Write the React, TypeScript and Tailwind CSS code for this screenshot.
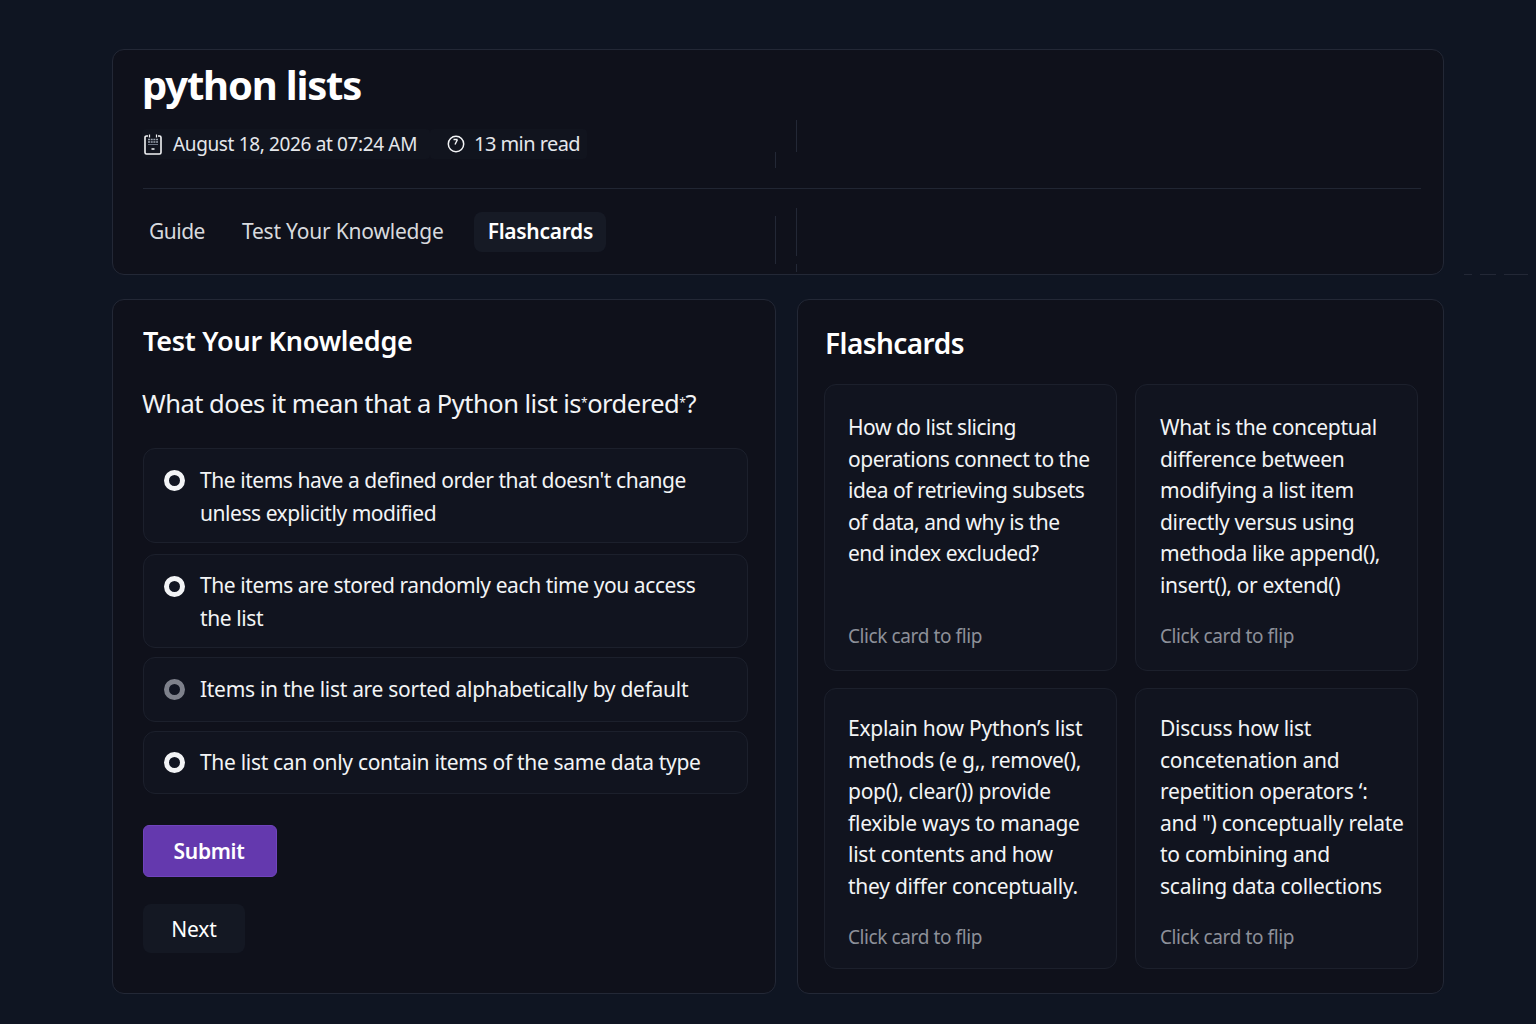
// =========================
// DATA
// =========================
const OPTIONS = [
  { text: "The items have a defined order that doesn't change unless explicitly modified", box: "h-[95px] mb-[11px] items-start pt-[15px]", radio: "mt-[6px]", track: "tracking-[-0.45px]", muted: false },
  { text: "The items are stored randomly each time you access the list", box: "h-[94px] mb-[9px] items-start pt-[14px]", radio: "mt-[7px]", track: "tracking-[-0.41px]", muted: false },
  { text: "Items in the list are sorted alphabetically by default", box: "h-[65px] mb-[9px] items-center", radio: "", track: "tracking-[-0.29px]", muted: true },
  { text: "The list can only contain items of the same data type", box: "h-[63px] items-center", radio: "", track: "tracking-[-0.31px]", muted: false },
];

const CARDS = [
  { lines: ["How do list slicing", "operations connect to the", "idea of retrieving subsets", "of data, and why is the", "end index excluded?"], track: "tracking-[-0.48px]", box: "h-[287px] pl-[23px] pt-[27px] pb-[20px]" },
  { lines: ["What is the conceptual", "difference between", "modifying a list item", "directly versus using", "methoda like append(),", "insert(), or extend()"], track: "tracking-[-0.35px]", box: "h-[287px] pl-[24px] pt-[27px] pb-[20px]" },
  { lines: ["Explain how Python’s list", "methods (e g,, remove(),", "pop(), clear()) provide", "flexible ways to manage", "list contents and how", "they differ conceptually."], track: "tracking-[-0.25px]", box: "h-[281px] pl-[23px] pt-[24px] pb-[17px]" },
  { lines: ["Discuss how list", "concetenation and", "repetition operators ‘:", "and \") conceptually relate", "to combining and", "scaling data collections"], track: "tracking-[-0.25px]", box: "h-[281px] pl-[24px] pt-[24px] pb-[17px]" },
];

// faint leftover rules that cross the header card
const RULES = [
  "left-[683px] top-[70px] h-[32px]",
  "left-[683px] top-[158px] h-[48px]",
  "left-[683px] top-[214px] h-[8px]",
  "left-[662px] top-[102px] h-[16px]",
  "left-[662px] top-[166px] h-[48px]",
];

function CalendarIcon() {
  return (
    <svg width="20" height="22" viewBox="0 0 20 22" fill="none" className="text-[#f3f4f6]">
      <path d="M5 3H3.5A1.5 1.5 0 0 0 2 4.5v15A1.5 1.5 0 0 0 3.5 21h13a1.5 1.5 0 0 0 1.5-1.5v-15A1.5 1.5 0 0 0 16.5 3H15" stroke="currentColor" strokeWidth="1.6" />
      <path d="M5 6.5h10M5 9h10" stroke="#9ca3af" strokeWidth="1.5" strokeDasharray="2 0.7" />
      <path d="M5 11.5h10" stroke="#6b7280" strokeWidth="1" />
      <path d="M8.5 16h3" stroke="currentColor" strokeWidth="1.5" />
      <path d="M6.5 1.5v3M13.500 1.500v3" stroke="currentColor" strokeWidth="1.2" />
    </svg>
  );
}

function ClockIcon() {
  return (
    <svg width="18" height="18" viewBox="0 0 18 18" fill="none" className="text-[#f3f4f6]">
      <circle cx="9" cy="9" r="7.7" stroke="currentColor" strokeWidth="1.5" />
      <path d="M8 9.5 10.500 4.500M6.500 4.500h4" stroke="currentColor" strokeWidth="1.4" />
    </svg>
  );
}

function Radio({ muted, className }: { muted: boolean; className: string }) {
  return (
    <span
      className={`h-[21px] w-[21px] shrink-0 rounded-full border-[5px] bg-[#111522] ${className} ${
        muted ? "border-[#7e818b]" : "border-[#f3f4f6]"
      }`}
    />
  );
}

function Flashcard({ lines, track, box }: { lines: string[]; track: string; box: string }) {
  return (
    <div className={`flex flex-col justify-between rounded-xl border border-[#1c202c] bg-[#11141f] pr-2 ${box}`}>
      <div className={`text-[21px] leading-[31.6px] text-[#f3f4f6] ${track}`}>
        {lines.map((l) => (
          <div key={l} className="whitespace-nowrap">{l}</div>
        ))}
      </div>
      <div className="text-[19px] leading-7 tracking-[-0.4px] text-[#8d9099]">Click card to flip</div>
    </div>
  );
}

export default function App() {
  return (
    <div className="relative min-h-[1024px] bg-[#0f1522] pt-[49px] pl-[112px] font-['Noto_Sans',sans-serif] text-white">
      <div className="flex w-[1332px] flex-col gap-[24px]">
        {/* HEADER */}
        <div className="relative h-[226px] rounded-xl border border-[#232836] bg-[#0f111b] pl-[29px] pr-[22px] pt-[8px]">
          {RULES.map((r) => (
            <span key={r} className={`absolute w-px bg-[#232836] ${r}`} />
          ))}
          <h1 className="text-[40px] leading-[54px] font-bold tracking-[-1.2px] text-white">python lists</h1>
          <div className="mt-[17px] flex items-center text-[#e5e7eb]">
            <div className="flex h-[30px] w-[288px] items-center gap-[10px] rounded bg-[#11141e] pl-[1px] text-[19px] tracking-[-0.36px]">
              <CalendarIcon />
              <span>August 18, 2026 at 07:24 AM</span>
            </div>
            <div className="flex h-[30px] items-center gap-[9px] rounded bg-[#11141e] pl-[17px] pr-[7px] text-[20px] tracking-[-0.55px]">
              <ClockIcon />
              <span>13 min read</span>
            </div>
          </div>
          <div className="mt-[29px] ml-px border-t border-[#212633]" />
          <div className="mt-[23px] flex items-center text-[21px] text-[#d8dade]">
            <span className="pl-[7px] tracking-[-0.5px]">Guide</span>
            <span className="ml-[37px] tracking-[-0.2px]">Test Your Knowledge</span>
            <span className="ml-[30px] flex h-[40px] items-center rounded-lg bg-[#161a25] pl-[14px] pr-[13px] font-semibold tracking-[-0.3px] text-white">
              Flashcards
            </span>
          </div>
        </div>

        {/* CONTENT */}
        <div className="flex gap-[21px]">
          <div className="h-[695px] w-[664px] rounded-xl border border-[#232836] bg-[#0f111b] pl-[30px] pr-[27px] pt-[21px]">
            <h2 className="text-[27px] leading-[40px] font-semibold tracking-[-0.25px] text-white">Test Your Knowledge</h2>
            <p className="mt-[22px] -ml-px whitespace-nowrap text-[25.5px] leading-[40px] tracking-[-0.5px] text-[#f3f4f6]">
              What does it mean that a Python list is<sup className="text-[12px]">*</sup>ordered<sup className="text-[12px]">*</sup>?
            </p>
            <div className="mt-[25px] flex flex-col">
              {OPTIONS.map((o) => (
                <div key={o.text} className={`flex gap-[15px] rounded-xl border border-[#1c202c] bg-[#11141f] pl-[20px] pr-[30px] ${o.box}`}>
                  <Radio muted={o.muted} className={o.radio} />
                  <span className={`text-[21px] leading-[32.5px] text-[#f3f4f6] ${o.track}`}>{o.text}</span>
                </div>
              ))}
            </div>
            <button className="mt-[31px] block h-[52px] w-[134px] rounded-md border border-[#7044bd] bg-[#6439ae] pt-[1px] pr-[2px] text-[21px] font-semibold tracking-[-0.3px] text-white">
              Submit
            </button>
            <button className="mt-[27px] block h-[49px] w-[102px] rounded-lg bg-[#141823] pt-[3px] text-[21px] tracking-[-0.2px] text-white">
              Next
            </button>
          </div>

          <div className="h-[695px] w-[647px] rounded-xl border border-[#232836] bg-[#0f111b] pl-[26px] pr-[25px] pt-[23px]">
            <h2 className="ml-[1px] text-[28px] leading-[40px] font-semibold tracking-[-0.55px] text-white">Flashcards</h2>
            <div className="mt-[21px] grid grid-cols-[293px_283px] gap-x-[18px] gap-y-[17px]">
              {CARDS.map((c) => (
                <Flashcard key={c.lines[0]} lines={c.lines} track={c.track} box={c.box} />
              ))}
            </div>
          </div>
        </div>
      </div>
      <span className="absolute left-[1464px] top-[274px] h-px w-[8px] bg-[#232836]" />
      <span className="absolute left-[1480px] top-[274px] h-px w-[16px] bg-[#232836]" />
      <span className="absolute left-[1504px] top-[274px] h-px w-[24px] bg-[#232836]" />
    </div>
  );
}
